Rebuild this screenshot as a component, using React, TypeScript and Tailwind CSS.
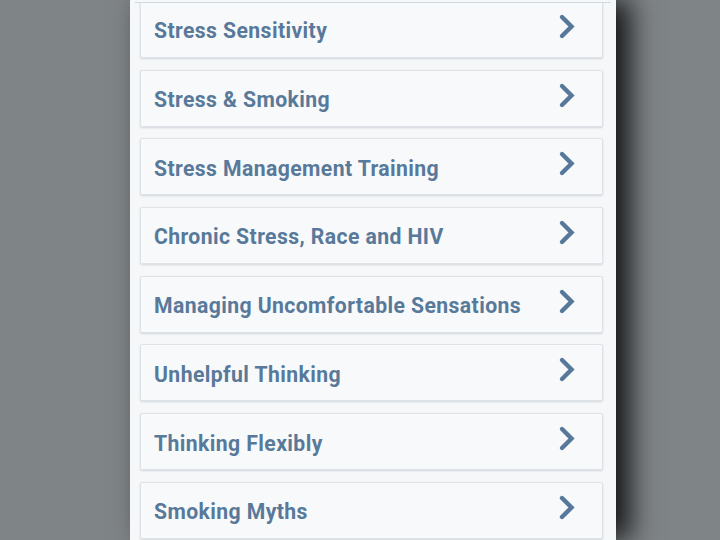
const topics = [
  'Stress Sensitivity',
  'Stress & Smoking',
  'Stress Management Training',
  'Chronic Stress, Race and HIV',
  'Managing Uncomfortable Sensations',
  'Unhelpful Thinking',
  'Thinking Flexibly',
  'Smoking Myths',
]

function Chevron() {
  return (
    <svg width="18" height="27" viewBox="0 0 18 27" className="-mt-[6px] shrink-0 text-[#56789a]">
      <polyline
        points="4,4 13.5,13.5 4,23"
        fill="none"
        stroke="currentColor"
        strokeWidth="4.4"
        strokeLinecap="round"
        strokeLinejoin="miter"
      />
    </svg>
  )
}

function TopicCard({ title }: { title: string }) {
  return (
    <button className="flex h-[57px] w-full shrink-0 items-center justify-between rounded-[2px] border border-[#dde3e8] bg-[#f8f9fa] pl-[13px] pr-[26px] text-left shadow-[0_1px_2px_rgba(60,70,80,0.18)]">
      <span className="pt-[3px] text-[21.2px] font-bold leading-none tracking-[0.4px] text-[#58799a]">
        {title}
      </span>
      <Chevron />
    </button>
  )
}

export default function App() {
  return (
    <div
      className="flex h-[540px] w-[720px] overflow-hidden bg-[#7f8487]"
      style={{ fontFamily: 'Roboto, "Noto Sans", sans-serif' }}
    >
      <div className="ml-[130px] flex h-full w-[486px] flex-col bg-[#f5f7f9] shadow-[14px_0_26px_rgba(0,0,0,0.85)]">
        {/* header edge, cut off above */}
        <div className="relative z-10 mx-[5px] h-[3px] border-b border-[#cfd8df] bg-[#f5f7f9]" />
        <div className="-mt-[2px] flex flex-col gap-[11.7px] pl-[10px] pr-[13px]">
          {topics.map((t) => (
            <TopicCard key={t} title={t} />
          ))}
        </div>
      </div>
    </div>
  )
}
